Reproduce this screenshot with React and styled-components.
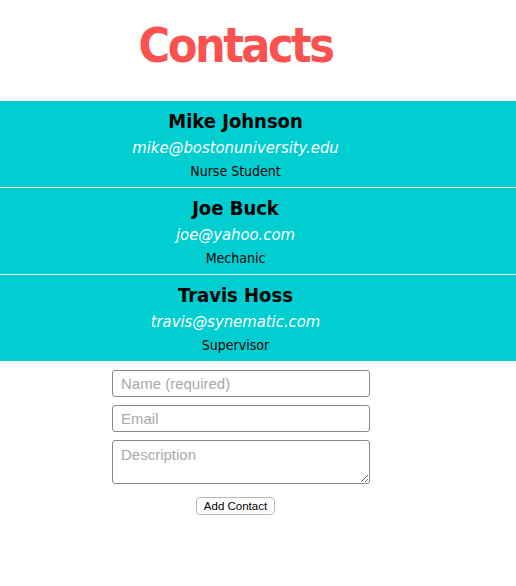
import React from 'react';
import styled, { createGlobalStyle } from 'styled-components';

const GlobalStyle = createGlobalStyle`
  body {
    margin: 0;
    background: #fff;
    font-family: "DejaVu Sans Condensed", "DejaVu Sans", sans-serif;
  }
`;

const Page = styled.div`
  width: 516px;
`;

const Title = styled.h1`
  width: 471px;
  margin: 0;
  padding: 12px 0 23px;
  text-align: center;
  font-size: 48px;
  letter-spacing: -2.5px;
  line-height: 66px;
  font-weight: bold;
  color: #fb5150;
`;

const List = styled.ul`
  margin: 0;
  padding: 0;
`;

const ContactItem = styled.li`
  list-style: none;
  background-color: #00ced1;
  height: 87px;
  border-bottom: 1px solid #fff;
  box-sizing: border-box;
  width: 516px;
  padding-top: 8px;

  &:last-child {
    border-bottom: none;
    height: 86px;
  }
`;

const Inner = styled.div`
  width: 471px;
  text-align: center;
`;

const Name = styled.div`
  font-size: 20px;
  font-weight: bold;
  line-height: 24px;
  color: #000;
`;

const Email = styled.div`
  font-size: 16.5px;
  font-style: italic;
  line-height: 29px;
  color: #fff;
`;

const Role = styled.div`
  font-size: 14px;
  line-height: 19px;
  color: #000;
`;

const Form = styled.form`
  width: 471px;
  padding-top: 9px;
  display: flex;
  flex-direction: column;
  align-items: center;
`;

const Field = styled.input`
  box-sizing: border-box;
  width: 258px;
  height: 27px;
  margin: 0 0 8px 11px;
  padding: 0 8px;
  border: 1px solid #8a8a8a;
  border-radius: 3px;
  font-family: "Liberation Sans", Arial, sans-serif;
  font-size: 15px;
  color: #333;

  &::placeholder {
    color: #a9a9a9;
  }
`;

const Area = styled.textarea`
  box-sizing: border-box;
  width: 258px;
  height: 44px;
  margin: 0 0 13px 11px;
  padding: 5px 8px;
  border: 1px solid #8a8a8a;
  border-radius: 3px;
  font-family: "Liberation Sans", Arial, sans-serif;
  font-size: 15px;
  resize: vertical;
  display: block;

  &::placeholder {
    color: #a9a9a9;
  }
`;

const AddButton = styled.button`
  height: 18px;
  padding: 0 7px;
  background: #fff;
  border: 1px solid #b8b8b8;
  border-radius: 4px;
  font-family: "Liberation Sans", Arial, sans-serif;
  font-size: 11.5px;
  line-height: 16px;
  color: #000;
`;

const contacts = [
  { id: 1, name: 'Mike Johnson', email: 'mike@bostonuniversity.edu', role: 'Nurse Student' },
  { id: 2, name: 'Joe Buck', email: 'joe@yahoo.com', role: 'Mechanic' },
  { id: 3, name: 'Travis Hoss', email: 'travis@synematic.com', role: 'Supervisor' },
];

function App() {
  return (
    <Page>
      <GlobalStyle />
      <Title>Contacts</Title>
      <List>
        {contacts.map(contact => (
          <ContactItem key={contact.id}>
            <Inner>
              <Name>{contact.name}</Name>
              <Email>{contact.email}</Email>
              <Role>{contact.role}</Role>
            </Inner>
          </ContactItem>
        ))}
      </List>
      <Form onSubmit={e => e.preventDefault()}>
        <Field placeholder="Name (required)" />
        <Field placeholder="Email" />
        <Area placeholder="Description" />
        <AddButton type="submit">Add Contact</AddButton>
      </Form>
    </Page>
  );
}

export default App;
